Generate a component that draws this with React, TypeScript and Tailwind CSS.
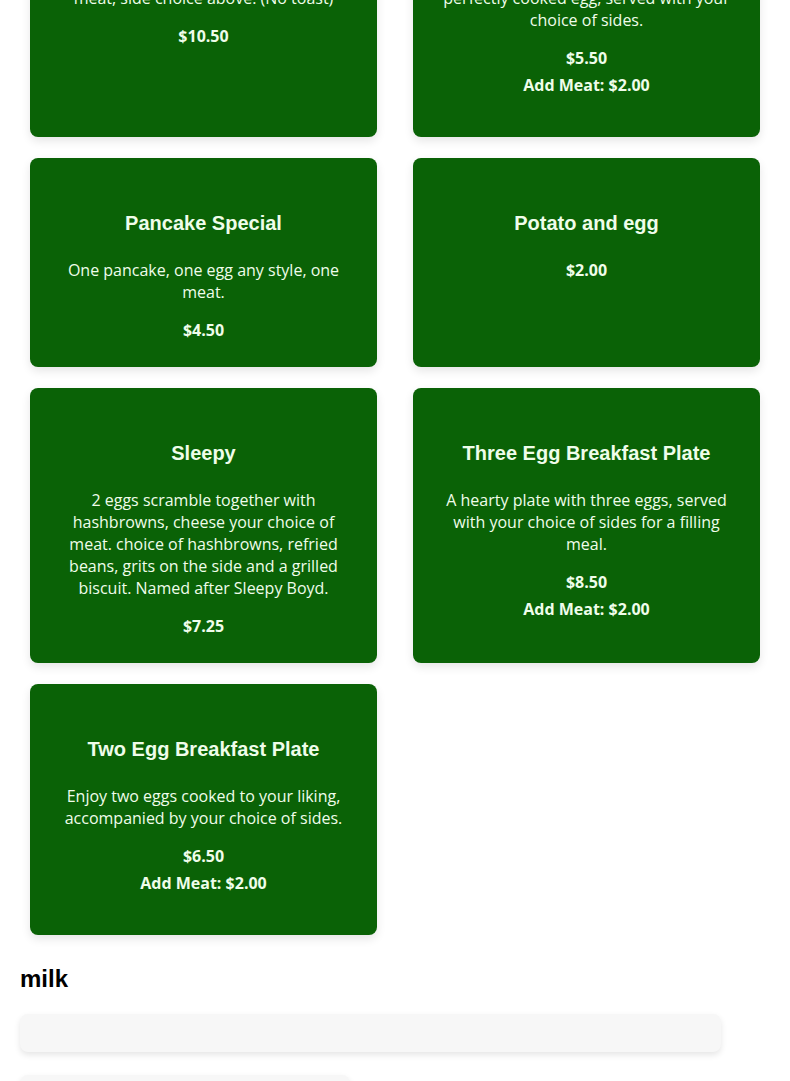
import React from "react";

type Item = {
  name: string;
  description?: string;
  price: string;
  addMeat?: string;
};

const breakfast: Item[] = [
  {
    name: "Biscuit Breakfast",
    description:
      "Biscuits and gravy, eggs, choice of meat, side choice above. (No toast)",
    price: "$10.50",
  },
  {
    name: "One Egg Breakfast Plate",
    description:
      "A classic breakfast featuring one perfectly cooked egg, served with your choice of sides.",
    price: "$5.50",
    addMeat: "$2.00",
  },
  {
    name: "Pancake Special",
    description: "One pancake, one egg any style, one meat.",
    price: "$4.50",
  },
  { name: "Potato and egg", price: "$2.00" },
  {
    name: "Sleepy",
    description:
      "2 eggs scramble together with hashbrowns, cheese your choice of meat. choice of hashbrowns, refried beans, grits on the side and a grilled biscuit. Named after Sleepy Boyd.",
    price: "$7.25",
  },
  {
    name: "Three Egg Breakfast Plate",
    description:
      "A hearty plate with three eggs, served with your choice of sides for a filling meal.",
    price: "$8.50",
    addMeat: "$2.00",
  },
  {
    name: "Two Egg Breakfast Plate",
    description:
      "Enjoy two eggs cooked to your liking, accompanied by your choice of sides.",
    price: "$6.50",
    addMeat: "$2.00",
  },
];

const MenuCard = ({ item }: { item: Item }) => {
  return (
    <div className="bg-[#0a6206] text-[#effdea] rounded-lg shadow-[0_4px_10px_rgba(0,0,0,0.1)] px-[30px] pt-[53px] pb-[26px] text-center">
      <h3 className="font-['Liberation_Sans',Arial,sans-serif] font-bold text-[20px] leading-[24px] mb-6">
        {item.name}
      </h3>
      {item.description && (
        <p className="text-[16px] leading-[22px] mb-4">{item.description}</p>
      )}
      <p className="font-bold text-[16px] leading-[22px]">{item.price}</p>
      {item.addMeat && (
        <p className="font-bold text-[16px] leading-[22px] mt-[5px] mb-[15px]">
          Add Meat: {item.addMeat}
        </p>
      )}
    </div>
  );
};

const App = () => {
  return (
    <div className="min-h-screen bg-white overflow-hidden font-['Open_Sans',sans-serif]">
      <div className="-mt-[136px] px-5">
        <div className="grid grid-cols-2 gap-x-[36px] gap-y-[21px] px-[10px]">
          {breakfast.map((item, index) => (
            <MenuCard key={index} item={item} />
          ))}
        </div>

        <h2 className="mt-[29px] font-['Liberation_Sans',Arial,sans-serif] font-bold text-[24px] leading-[30px] text-black">
          milk
        </h2>
        <div className="mt-[20px] flex flex-col gap-[23px]">
          <div className="w-[701px] h-[38px] bg-[#f7f7f7] rounded-lg shadow-[0_3px_6px_rgba(0,0,0,0.1)]"></div>
          <div className="w-[330px] h-[38px] bg-[#f7f7f7] rounded-lg shadow-[0_3px_6px_rgba(0,0,0,0.1)]"></div>
        </div>
      </div>
    </div>
  );
};

export default App;
